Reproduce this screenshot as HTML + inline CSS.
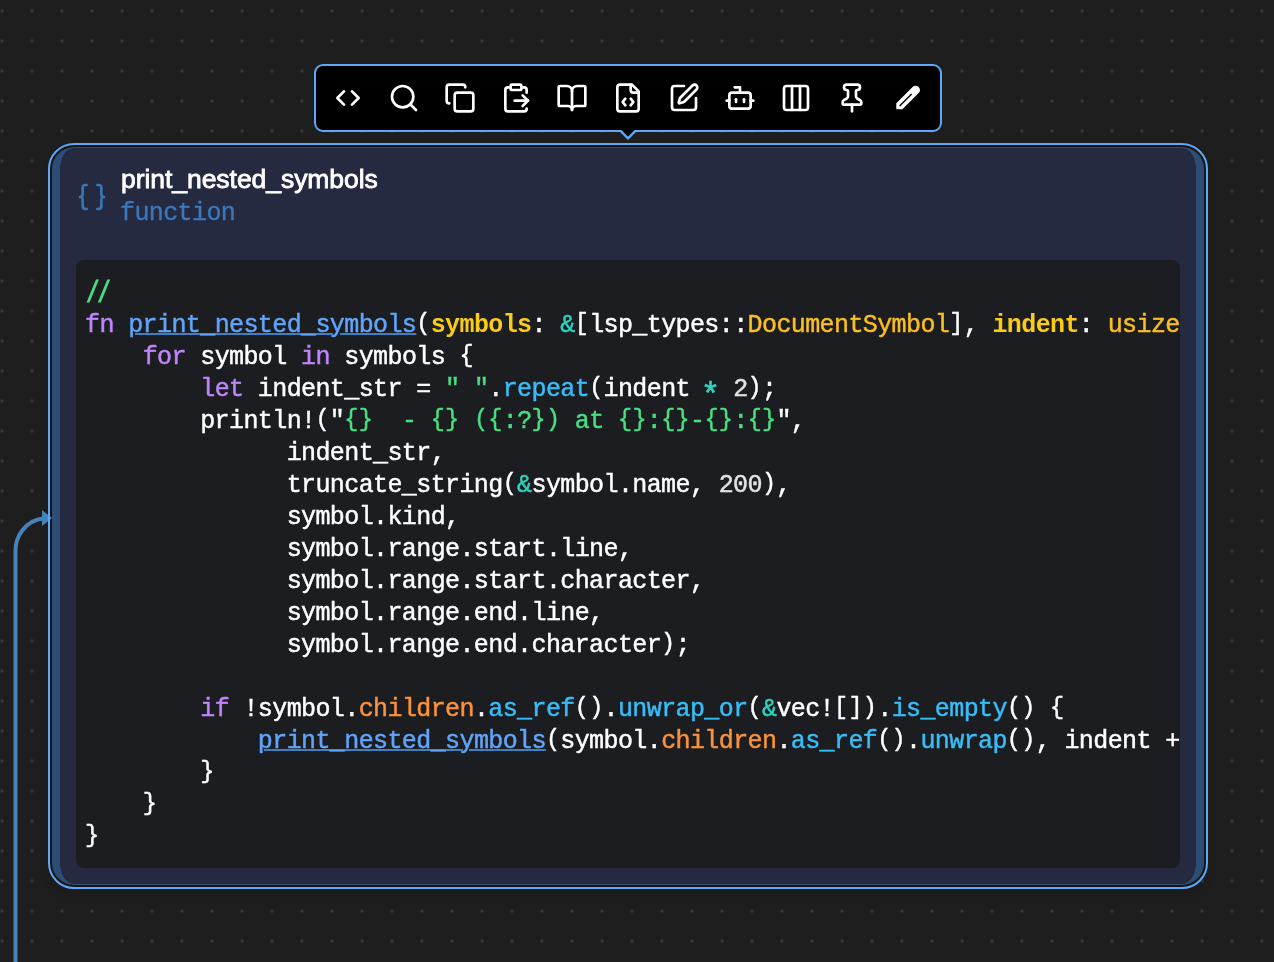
<!DOCTYPE html>
<html lang="en">
<head>
<meta charset="utf-8">
<title>print_nested_symbols</title>
<style>
*{box-sizing:border-box;margin:0;padding:0}
html,body{width:1274px;height:962px;overflow:hidden;background:#1e1e1e}
body{position:relative;font-family:"Liberation Sans",sans-serif}
.abs{position:absolute}
#grid{left:0;top:0;width:1274px;height:962px}
#edge{left:0;top:0;width:1274px;height:962px;z-index:3}
#toolbar{left:314px;top:64px;width:628px;height:68px;border:2px solid #5ca8fa;border-radius:9px;background:#000;z-index:6;padding:4px;display:flex}
#toolbar .btn{width:56px;height:56px;display:flex;align-items:center;justify-content:center}
#toolbar svg{width:32px;height:32px;fill:none;stroke:#fff;stroke-width:2;stroke-linecap:round;stroke-linejoin:round}
#notch{left:612px;top:130px;width:32px;height:14px;z-index:7}
#card{left:52px;top:147px;width:1152px;height:738px;border-style:solid;border-color:#2c4d76;border-width:1px 8px;border-radius:22px;background:#252a40;z-index:2;box-shadow:0 0 0 2px #181510,0 8px 14px 0 rgba(0,0,0,.16)}
#outline{left:48px;top:143px;width:1160px;height:746px;border:2px solid #5ca8fa;border-radius:26px;z-index:4}
#hicon{left:76px;top:181px;width:32px;height:32px;z-index:5;fill:none;stroke:#3873b3;stroke-width:2;stroke-linecap:round;stroke-linejoin:round}
#title{will-change:transform;left:120.5px;top:163px;z-index:5;color:#fff;font-weight:normal;-webkit-text-stroke:0.8px #fff;font-size:26.5px;line-height:32px;white-space:pre;letter-spacing:-0.05px}
#sub{will-change:transform;left:120px;top:198px;z-index:5;color:#3a78bd;font-family:"Liberation Mono",monospace;font-size:25px;letter-spacing:-0.6px;-webkit-text-stroke:0.35px currentColor;line-height:32px;white-space:pre}
#code{left:76px;top:260px;width:1104px;height:608px;border-radius:8px;background:#1c1d20;z-index:5;overflow:hidden;padding:18px 0 0 8.5px}
#code pre{will-change:transform;font-family:"Liberation Mono",monospace;font-size:25px;letter-spacing:-0.6px;line-height:32px;color:#fff;white-space:pre;-webkit-text-stroke:0.45px currentColor}
#code b{font-weight:inherit;font-size:23.5px;letter-spacing:0.3px;position:relative;top:-2px}.st{display:inline-block;transform:translate(-1px,7px) scale(1.3)}.k{color:#c084fc}.f{color:#60a5fa;text-decoration:underline;text-decoration-color:#3b82c4;text-decoration-thickness:1.6px;text-underline-offset:0.5px}
.p{color:#facc15;font-weight:bold;-webkit-text-stroke:0}.t{color:#fbbf24}.a{color:#2dd4bf}.s{color:#4ade80}.m{color:#38bdf8}.o{color:#fb923c}.n{color:#e4e4e7}.c{color:#4ade80;-webkit-text-stroke:0.9px currentColor;display:inline-block;letter-spacing:-2.4px;transform-origin:0 75%;transform:translate(1px,1.9px) scale(0.9,1.17)}
</style>
</head>
<body>
<svg id="grid" class="abs" width="1274" height="962">
<defs><pattern id="dots" x="-13" y="-4" width="30" height="30" patternUnits="userSpaceOnUse"><circle cx="15" cy="15" r="1.75" fill="#363636"/></pattern></defs>
<rect width="1274" height="962" fill="url(#dots)"/>
</svg>

<div id="card" class="abs"></div>

<svg id="edge" class="abs" width="1274" height="962">
<path d="M15.5 962 L15.5 550 C15.5 538 24 520.5 44 518.3" fill="none" stroke="#4583b8" stroke-width="4"/>
<path d="M42 510 L52 518 L42 526 Z" fill="#4583b8"/>
</svg>

<div id="outline" class="abs"></div>

<div id="toolbar" class="abs">
<div class="btn"><svg viewBox="0 0 24 24"><path d="m9 7-5 5 5 5"/><path d="m15 7 5 5-5 5"/></svg></div>
<div class="btn"><svg viewBox="0 0 24 24"><circle cx="11" cy="11" r="8"/><path d="m21 21-4.3-4.3"/></svg></div>
<div class="btn"><svg viewBox="0 0 24 24"><rect width="14" height="14" x="8" y="8" rx="2" ry="2"/><path d="M4 16c-1.1 0-2-.9-2-2V4c0-1.1.9-2 2-2h10c1.1 0 2 .9 2 2"/></svg></div>
<div class="btn"><svg viewBox="0 0 24 24"><path d="M15 2H9a1 1 0 0 0-1 1v2c0 .6.4 1 1 1h6c.6 0 1-.4 1-1V3c0-.6-.4-1-1-1Z"/><path d="M8 4H6a2 2 0 0 0-2 2v14a2 2 0 0 0 2 2h12a2 2 0 0 0 2-2M16 4h2a2 2 0 0 1 2 2v2M11 14h10"/><path d="m17 10 4 4-4 4"/></svg></div>
<div class="btn"><svg viewBox="0 0 24 24"><path d="M12 7v14"/><path d="M3 18a1 1 0 0 1-1-1V4a1 1 0 0 1 1-1h5a4 4 0 0 1 4 4 4 4 0 0 1 4-4h5a1 1 0 0 1 1 1v13a1 1 0 0 1-1 1h-6a3 3 0 0 0-3 3 3 3 0 0 0-3-3z"/></svg></div>
<div class="btn"><svg viewBox="0 0 24 24"><path d="M10 12.5 8 15l2 2.5"/><path d="m14 12.5 2 2.5-2 2.5"/><path d="M14 2v4a2 2 0 0 0 2 2h4"/><path d="M15 2H6a2 2 0 0 0-2 2v16a2 2 0 0 0 2 2h12a2 2 0 0 0 2-2V7z"/></svg></div>
<div class="btn"><svg viewBox="0 0 24 24"><path d="M12 3H5a2 2 0 0 0-2 2v14a2 2 0 0 0 2 2h14a2 2 0 0 0 2-2v-7"/><path d="M18.375 2.625a1 1 0 0 1 3 3l-9.013 9.014a2 2 0 0 1-.853.505l-2.873.84a.5.5 0 0 1-.62-.62l.84-2.873a2 2 0 0 1 .506-.852z"/></svg></div>
<div class="btn"><svg viewBox="0 0 24 24"><path d="M12 8V4H8"/><rect width="16" height="12" x="4" y="8" rx="2"/><path d="M2 14h2"/><path d="M20 14h2"/><path d="M15 13v2"/><path d="M9 13v2"/></svg></div>
<div class="btn"><svg viewBox="0 0 24 24"><rect width="18" height="18" x="3" y="3" rx="2"/><path d="M9 3v18"/><path d="M15 3v18"/></svg></div>
<div class="btn"><svg viewBox="0 0 24 24"><path d="M12 17v5"/><path d="M9 10.76a2 2 0 0 1-1.11 1.79l-1.78.9A2 2 0 0 0 5 15.24V16a1 1 0 0 0 1 1h12a1 1 0 0 0 1-1v-.76a2 2 0 0 0-1.11-1.79l-1.78-.9A2 2 0 0 1 15 10.76V7a1 1 0 0 1 1-1 2 2 0 0 0 0-4H8a2 2 0 0 0 0 4 1 1 0 0 1 1 1z"/></svg></div>
<div class="btn"><svg viewBox="0 0 32 32" style="stroke:none;fill:#fff"><path d="M4.3 27.2 L4.3 21.2 L20.6 4.9 A4.3 4.3 0 0 1 26.7 11 L10.4 27.2 Z"/><path d="M7.6 23.9 L19.6 11.9" style="stroke:#000;stroke-width:1.4;stroke-linecap:butt"/></svg></div>
</div>
<svg id="notch" class="abs" viewBox="612 130 32 14"><path d="M618.2 128.5 L628 138.3 L637.8 128.5" fill="#000" stroke="#5ca8fa" stroke-width="2.4" stroke-linejoin="miter"/></svg>

<svg id="hicon" class="abs" viewBox="0 0 24 24"><path d="M8 3H7a2 2 0 0 0-2 2v5a2 2 0 0 1-2 2 2 2 0 0 1 2 2v5c0 1.1.9 2 2 2h1"/><path d="M16 21h1a2 2 0 0 0 2-2v-5c0-1.1.9-2 2-2a2 2 0 0 1-2-2V5a2 2 0 0 0-2-2h-1"/></svg>
<div id="title" class="abs">print_nested_symbols</div>
<div id="sub" class="abs">function</div>

<div id="code" class="abs"><pre><span class="c">// </span>
<span class="k">fn</span> <span class="f">print_nested_symbols</span><b>(</b><span class="p">symbols</span>: <span class="a">&amp;</span><b>[</b>lsp_types::<span class="t">DocumentSymbol</span><b>]</b>, <span class="p">indent</span>: <span class="t">usize</span><b>)</b> <b>{</b>
    <span class="k">for</span> symbol <span class="k">in</span> symbols <b>{</b>
        <span class="k">let</span> indent_str = <span class="s">" "</span>.<span class="m">repeat</span><b>(</b>indent <span class="a st">*</span> <span class="n">2</span><b>)</b>;
        println!<b>(</b>"<span class="s"><b>{}</b>  - <b>{}</b> <b>({</b>:?<b>})</b> at <b>{}</b>:<b>{}</b>-<b>{}</b>:<b>{}</b></span>",
              indent_str,
              truncate_string<b>(</b><span class="a">&amp;</span>symbol.name, <span class="n">200</span><b>)</b>,
              symbol.kind,
              symbol.range.start.line,
              symbol.range.start.character,
              symbol.range.end.line,
              symbol.range.end.character<b>)</b>;

        <span class="k">if</span> !symbol.<span class="o">children</span>.<span class="m">as_ref</span><b>()</b>.<span class="m">unwrap_or</span><b>(</b><span class="a">&amp;</span>vec!<b>[])</b>.<span class="m">is_empty</span><b>()</b> <b>{</b>
            <span class="f">print_nested_symbols</span><b>(</b>symbol.<span class="o">children</span>.<span class="m">as_ref</span><b>()</b>.<span class="m">unwrap</span><b>()</b>, indent + <span class="n">1</span><b>)</b>;
        <b>}</b>
    <b>}</b>
<b>}</b></pre></div>
</body>
</html>
